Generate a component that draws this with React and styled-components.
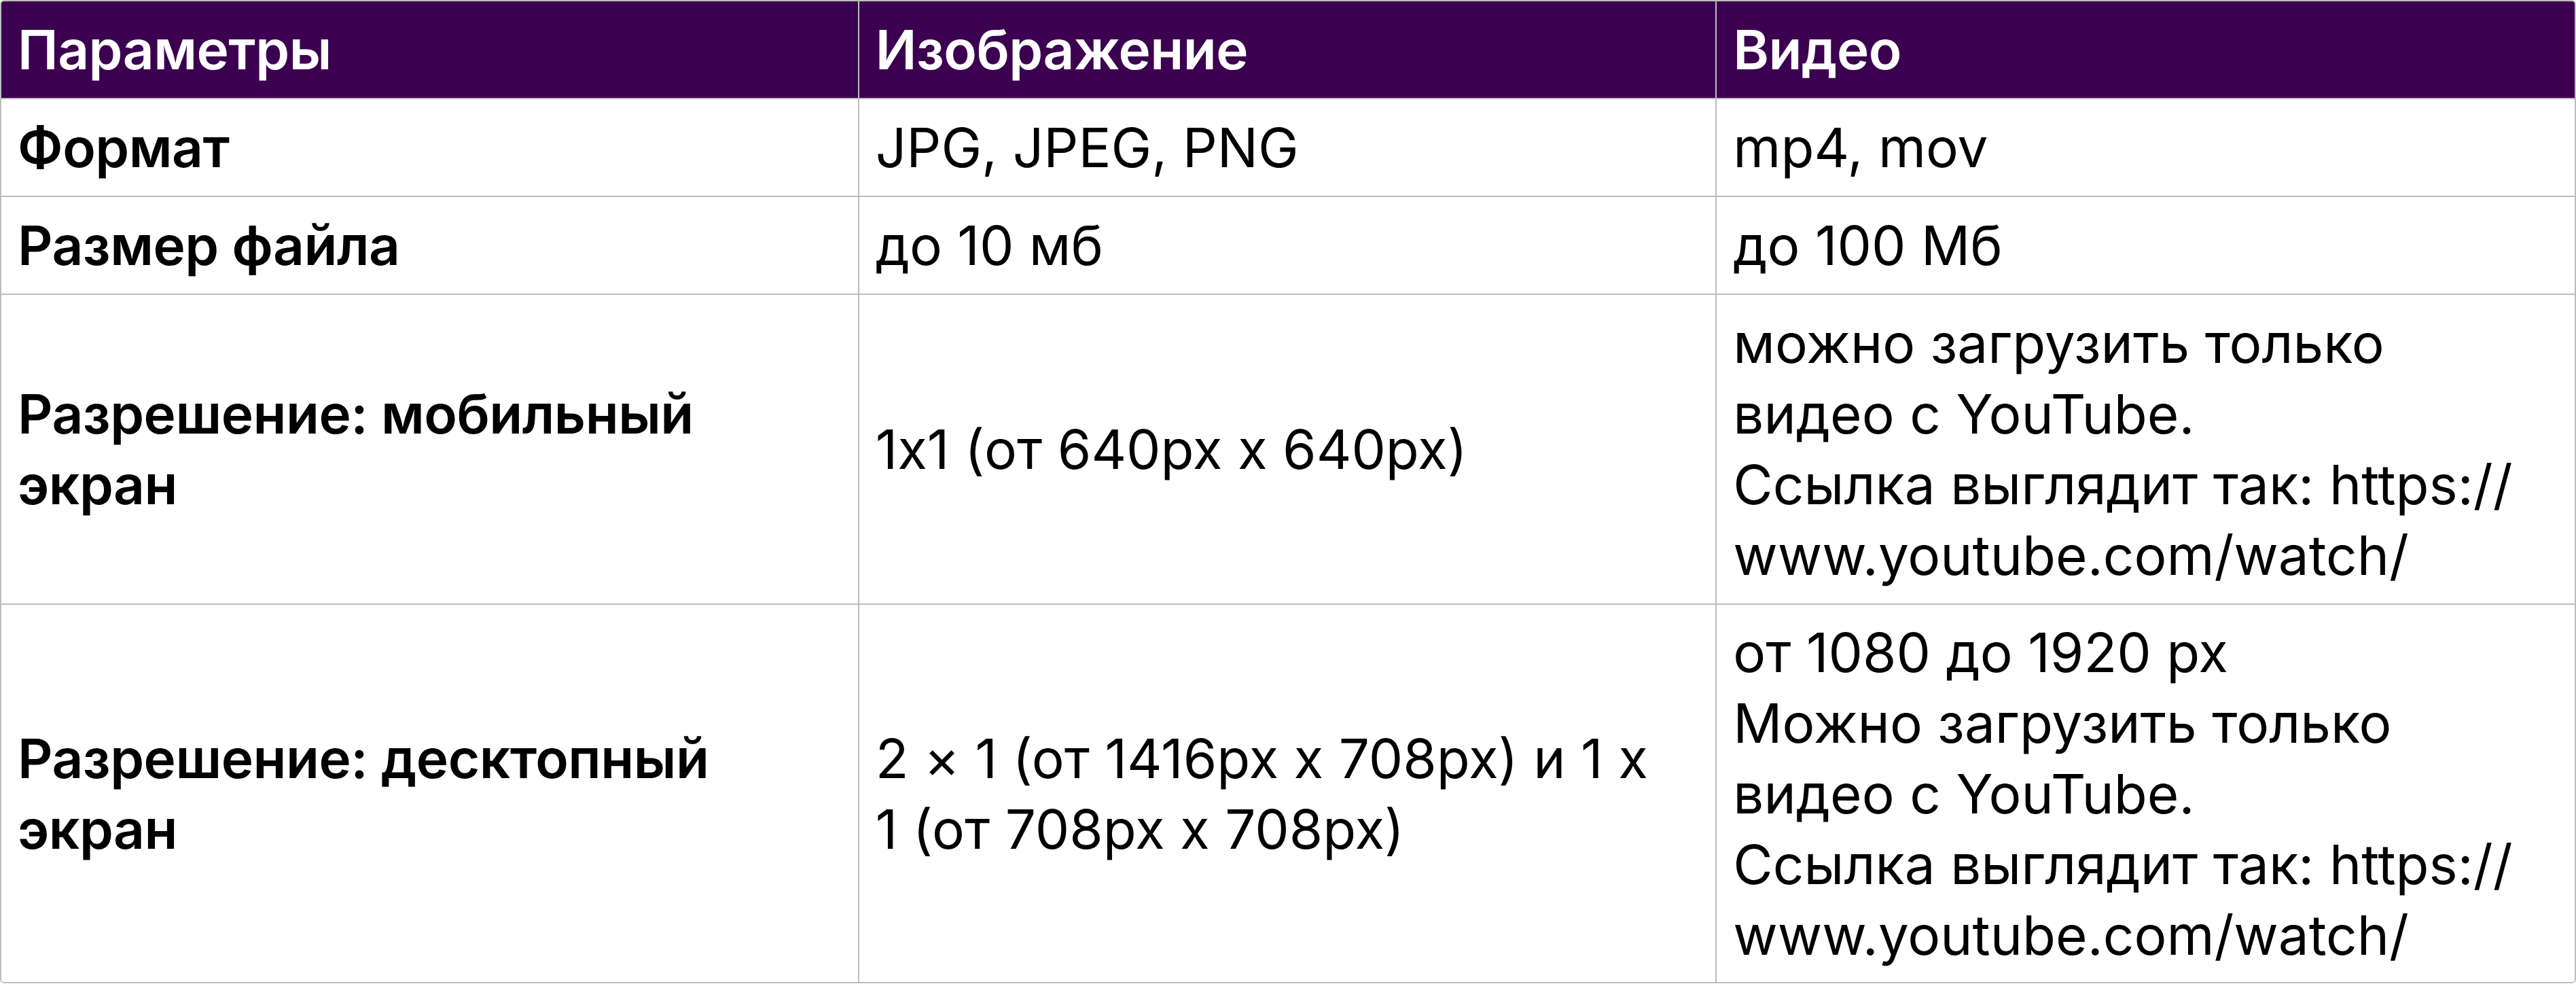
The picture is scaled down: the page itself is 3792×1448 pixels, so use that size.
import React from 'react';
import styled, { createGlobalStyle } from 'styled-components';

const GlobalStyle = createGlobalStyle`
  html, body {
    margin: 0;
    padding: 0;
    background: #ffffff;
  }
  body {
    font-family: 'Inter', 'Noto Sans', sans-serif;
    font-feature-settings: 'calt' 0;
  }
`;

const Table = styled.div`
  display: grid;
  grid-template-columns: repeat(3, 1fr);
  width: 3792px;
  box-sizing: border-box;
  border: 2px solid #bdbdbd;
  border-radius: 6px;
  overflow: hidden;
`;

const Cell = styled.div`
  display: flex;
  flex-direction: column;
  justify-content: center;
  box-sizing: border-box;
  padding: ${p => (p.$lastRow ? '18px 24px 17px' : '19px 24px')};
  font-size: 80px;
  line-height: 104px;
  white-space: nowrap;
  font-feature-settings: 'calt' 0;
  color: ${p => (p.$head ? '#ffffff' : '#000000')};
  background: ${p => (p.$head ? '#3c0050' : '#ffffff')};
  font-weight: ${p => (p.$head || p.$label ? 600 : 400)};
  letter-spacing: ${p => (p.$head || p.$label ? '-0.5px' : '0')};
  border-right: ${p => (p.$lastCol ? 'none' : '2px solid #bdbdbd')};
  border-bottom: ${p => (p.$lastRow ? 'none' : '2px solid #bdbdbd')};
`;

const Line = styled.span`
  display: block;
`;

const head = ['Параметры', 'Изображение', 'Видео'];

const rows = [
  [['Формат'], ['JPG, JPEG, PNG'], ['mp4, mov']],
  [['Размер файла'], ['до 10 мб'], ['до 100 Мб']],
  [
    ['Разрешение: мобильный', 'экран'],
    ['1x1 (от 640px x 640px)'],
    [
      'можно загрузить только',
      'видео с YouTube.',
      'Ссылка выглядит так: https://',
      'www.youtube.com/watch/',
    ],
  ],
  [
    ['Разрешение: десктопный', 'экран'],
    ['2 × 1 (от 1416px x 708px) и 1 x', '1 (от 708px x 708px)'],
    [
      'от 1080 до 1920 px',
      'Можно загрузить только',
      'видео с YouTube.',
      'Ссылка выглядит так: https://',
      'www.youtube.com/watch/',
    ],
  ],
];

const App = () => (
  <>
    <GlobalStyle />
    <Table>
      {head.map((title, i) => (
        <Cell key={title} $head $lastCol={i === 2}>
          {title}
        </Cell>
      ))}
      {rows.map((row, r) =>
        row.map((lines, c) => (
          <Cell
            key={`${r}-${c}`}
            $label={c === 0}
            $lastCol={c === 2}
            $lastRow={r === rows.length - 1}
          >
            {lines.map(line => (
              <Line key={line}>{line}</Line>
            ))}
          </Cell>
        ))
      )}
    </Table>
  </>
);

export default App;
